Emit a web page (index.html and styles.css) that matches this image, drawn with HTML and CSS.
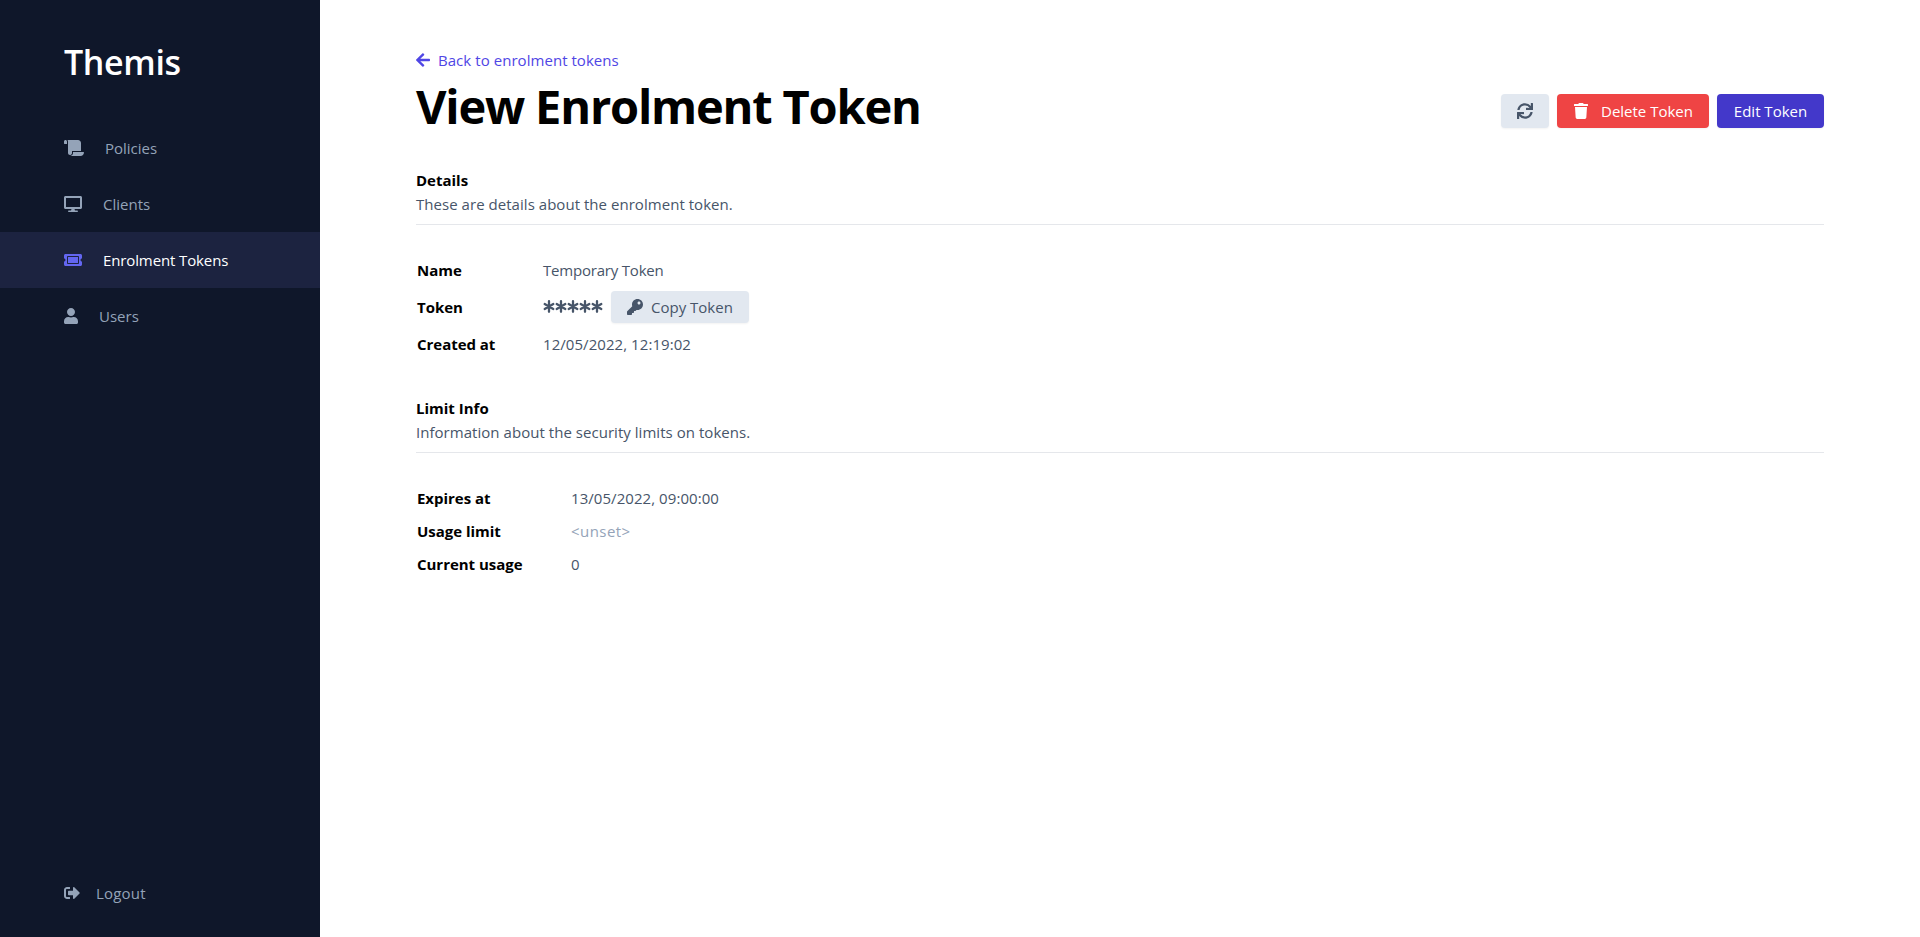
FILE: index.html
```html
<!DOCTYPE html>
<html lang="en">
<head>
<meta charset="utf-8">
<title>Themis</title>
<link rel="stylesheet" href="styles.css">
</head>
<body>
<div class="app">
  <aside class="sidebar">
    <div class="brand"><span>Themis</span></div>
    <nav class="nav">
      <a class="nav-item"><svg width="20" height="16" viewBox="0 0 640 512"><path d="M48 0C21.53 0 0 21.53 0 48v64c0 8.84 7.16 16 16 16h80V48C96 21.53 74.47 0 48 0zm208 412.57V352h288V96c0-52.94-43.06-96-96-96H111.59C121.74 13.41 128 29.92 128 48v368c0 38.87 34.65 69.65 74.75 63.12C234.22 474 256 444.46 256 412.57zM288 384v32c0 52.93-43.06 96-96 96h336c61.86 0 112-50.14 112-112 0-8.84-7.16-16-16-16H288z"/></svg><span>Policies</span></a>
      <a class="nav-item"><svg width="18" height="16" viewBox="0 0 576 512"><path d="M528 0H48C21.5 0 0 21.5 0 48v320c0 26.5 21.5 48 48 48h192l-16 48h-72c-13.300 0-24 10.700-24 24s10.700 24 24 24h272c13.300 0 24-10.700 24-24s-10.700-24-24-24h-72l-16-48h192c26.500 0 48-21.500 48-48V48c0-26.500-21.500-48-48-48zm-16 352H64V64h448v288z"/></svg><span>Clients</span></a>
      <a class="nav-item active"><svg width="18" height="16" viewBox="0 0 576 512"><path d="M128 160h320v192H128V160zm400 96c0 26.510 21.490 48 48 48v96c0 26.510-21.490 48-48 48H48c-26.510 0-48-21.490-48-48v-96c26.510 0 48-21.490 48-48s-21.490-48-48-48v-96c0-26.510 21.490-48 48-48h480c26.510 0 48 21.490 48 48v96c-26.510 0-48 21.490-48 48zm-48-104c0-13.255-10.745-24-24-24H120c-13.255 0-24 10.745-24 24v208c0 13.255 10.745 24 24 24h336c13.255 0 24-10.745 24-24V152z"/></svg><span>Enrolment Tokens</span></a>
      <a class="nav-item"><svg width="14" height="16" viewBox="0 0 448 512"><path d="M224 256c70.700 0 128-57.300 128-128S294.700 0 224 0 96 57.300 96 128s57.300 128 128 128zm89.600 32h-16.700c-22.200 10.200-46.900 16-72.900 16s-50.600-5.800-72.900-16h-16.700C60.200 288 0 348.200 0 422.400V464c0 26.500 21.500 48 48 48h352c26.500 0 48-21.500 48-48v-41.600c0-74.200-60.200-134.400-134.400-134.400z"/></svg><span>Users</span></a>
    </nav>
    <a class="nav-item logout"><svg width="16" height="16" viewBox="0 0 512 512"><path d="M497 273L329 441c-15 15-41 4.500-41-17v-96H152c-13.300 0-24-10.700-24-24v-96c0-13.300 10.700-24 24-24h136V88c0-21.400 25.900-32 41-17l168 168c9.300 9.400 9.300 24.600 0 34zM192 436v-40c0-6.600-5.400-12-12-12H96c-17.700 0-32-14.300-32-32V160c0-17.700 14.300-32 32-32h84c6.600 0 12-5.400 12-12V76c0-6.600-5.400-12-12-12H96c-53 0-96 43-96 96v192c0 53 43 96 96 96h84c6.600 0 12-5.400 12-12z"/></svg><span>Logout</span></a>
  </aside>
  <main class="main">
    <a class="back"><svg width="14" height="16" viewBox="0 0 448 512"><path d="M257.500 445.100l-22.200 22.200c-9.400 9.400-24.600 9.400-33.900 0L7 273c-9.400-9.400-9.400-24.600 0-33.900L201.400 44.700c9.400-9.400 24.600-9.400 33.900 0l22.200 22.200c9.500 9.500 9.300 25-.4 34.300L136.600 216H424c13.300 0 24 10.700 24 24v32c0 13.300-10.700 24-24 24H136.600l120.500 114.800c9.800 9.300 10 24.800.4 34.300z"/></svg><span>Back to enrolment tokens</span></a>
    <header class="head">
      <h1>View Enrolment Token</h1>
      <div class="actions">
        <button class="btn grey refresh"><svg width="16" height="16" viewBox="0 0 512 512"><path d="M440.650 12.570l4 82.770A247.160 247.160 0 0 0 255.830 8C134.730 8 33.910 94.920 12.290 209.820A12 12 0 0 0 24.090 224h49.050a12 12 0 0 0 11.670-9.260 175.910 175.910 0 0 1 317-56.940l-101.460-4.860a12 12 0 0 0-12.570 12v47.410a12 12 0 0 0 12 12H500a12 12 0 0 0 12-12V12a12 12 0 0 0-12-12h-47.370a12 12 0 0 0-11.980 12.570zM255.830 432a175.610 175.610 0 0 1-146-77.800l101.800 4.870a12 12 0 0 0 12.570-12v-47.400a12 12 0 0 0-12-12H12a12 12 0 0 0-12 12V500a12 12 0 0 0 12 12h47.350a12 12 0 0 0 12-12.600l-4.150-82.570A247.170 247.170 0 0 0 255.830 504c121.110 0 221.930-86.920 243.550-201.820a12 12 0 0 0-11.800-14.180h-49.050a12 12 0 0 0-11.670 9.260A175.860 175.860 0 0 1 255.830 432z"/></svg></button>
        <button class="btn red"><svg width="14" height="16" viewBox="0 0 448 512"><path d="M432 32H312l-9.400-18.700A24 24 0 0 0 281.100 0H166.800a23.720 23.720 0 0 0-21.400 13.300L136 32H16A16 16 0 0 0 0 48v32a16 16 0 0 0 16 16h416a16 16 0 0 0 16-16V48a16 16 0 0 0-16-16zM53.200 467a48 48 0 0 0 47.900 45h245.800a48 48 0 0 0 47.900-45L416 128H32z"/></svg><span>Delete Token</span></button>
        <button class="btn indigo"><span>Edit Token</span></button>
      </div>
    </header>
    <section class="section">
      <h2>Details</h2>
      <p>These are details about the enrolment token.</p>
      <dl class="rows details">
        <dt>Name</dt><dd class="name">Temporary Token</dd>
        <dt>Token</dt><dd class="secret">
          <span class="stars"><svg width="60" height="14" viewBox="0 0 60 14"><defs><path id="star" d="M6 1.200v10.600M1.700 4l8.600 5M1.700 9l8.600-5"/></defs><use href="#star"/><use href="#star" x="12"/><use href="#star" x="24"/><use href="#star" x="36"/><use href="#star" x="48"/></svg></span>
          <button class="btn grey copy"><svg width="16" height="16" viewBox="0 0 512 512"><path d="M512 176.001C512 273.203 433.202 352 336 352c-11.220 0-22.190-1.062-32.827-3.069l-24.012 27.014A23.999 23.999 0 0 1 261.223 384H224v40c0 13.255-10.745 24-24 24h-40v40c0 13.255-10.745 24-24 24H24c-13.255 0-24-10.745-24-24v-78.059c0-6.365 2.529-12.470 7.029-16.971l161.802-161.802C163.108 213.814 160 195.271 160 176 160 78.798 238.797.001 335.999 0 433.488-.001 512 78.511 512 176.001zM336 128c0 26.510 21.490 48 48 48s48-21.490 48-48-21.490-48-48-48-48 21.490-48 48z"/></svg><span>Copy Token</span></button></dd>
        <dt>Created at</dt><dd class="date">12/05/2022, 12:19:02</dd>
      </dl>
    </section>
    <section class="section limits-section">
      <h2>Limit Info</h2>
      <p>Information about the security limits on tokens.</p>
      <dl class="rows limits">
        <dt>Expires at</dt><dd class="date">13/05/2022, 09:00:00</dd>
        <dt>Usage limit</dt><dd class="unset">&lt;unset&gt;</dd>
        <dt>Current usage</dt><dd>0</dd>
      </dl>
    </section>
  </main>
</div>
</body>
</html>
```
FILE: styles.css
```css
* { box-sizing: border-box; margin: 0; padding: 0; }
body { font-family: "Open Sans", "Noto Sans", sans-serif; font-size: 15px; line-height: 24px; color: #000; background: #fff; }
svg { display: block; flex: none; fill: currentColor; }
span { white-space: nowrap; }
.app { display: flex; height: 937px; }
.sidebar { width: 320px; flex: none; background: #0f172a; color: #94a3b8; display: flex; flex-direction: column; }
.brand { height: 120px; padding: 42px 64px 0; color: #fff; font-size: 34px; font-weight: 600; line-height: 40px; letter-spacing: -.35px; }
.nav-item { display: flex; align-items: center; gap: 21px; height: 56px; padding-left: 64px; }
.nav-item.active { background: #1c2340; color: #fff; letter-spacing: -.12px; }
.nav-item.active svg { color: #6366f1; }
.logout { margin-top: auto; margin-bottom: 16px; gap: 16px; letter-spacing: .2px; }
.main { flex: 1; padding: 48px 96px 0; }
.back { display: flex; align-items: center; gap: 8px; height: 24px; color: #4f46e5; letter-spacing: .05px; }
.head { display: flex; justify-content: space-between; align-items: flex-end; height: 56px; margin-bottom: 40px; }
h1 { font-size: 47px; line-height: 48px; font-weight: 700; align-self: flex-start; margin-top: 10px; letter-spacing: -1.2px; white-space: nowrap; }
.actions { display: flex; gap: 8px; }
.btn { display: flex; align-items: center; height: 34px; border: 0; border-radius: 4px; font: inherit; color: #fff; box-shadow: 0 1px 2px rgba(0,0,0,.05); }
.grey { background: #e2e8f0; color: #475569; }
.refresh { width: 48px; justify-content: center; }
.red { width: 152px; background: #ef4444; padding-left: 17px; gap: 13px; }
.indigo { width: 107px; background: #4338ca; justify-content: center; }
h2 { font-size: 15px; line-height: 24px; font-weight: 700; }
p { color: #475569; height: 33px; border-bottom: 1px solid #e5e7eb; letter-spacing: .04px; }
.rows { display: grid; align-items: center; padding: 28px 1px 0; color: #475569; }
.rows dt { color: #000; font-weight: 700; letter-spacing: -.03px; }
.details { grid-template-columns: 126px 1fr; grid-auto-rows: 37px; padding-top: 26px; }
.limits { grid-template-columns: 154px 1fr; grid-auto-rows: 33px; }
.limits-section { margin-top: 34px; }
.name { letter-spacing: -.2px; }
.date { letter-spacing: .06px; }
.secret { display: flex; align-items: center; gap: 8px; }
.stars svg { fill: none; stroke: #475569; stroke-width: 2.3; stroke-linecap: round; }
.copy { width: 138px; height: 32px; padding-left: 16px; gap: 8px; }
.unset { color: #94a3b8; letter-spacing: .45px; }
```
